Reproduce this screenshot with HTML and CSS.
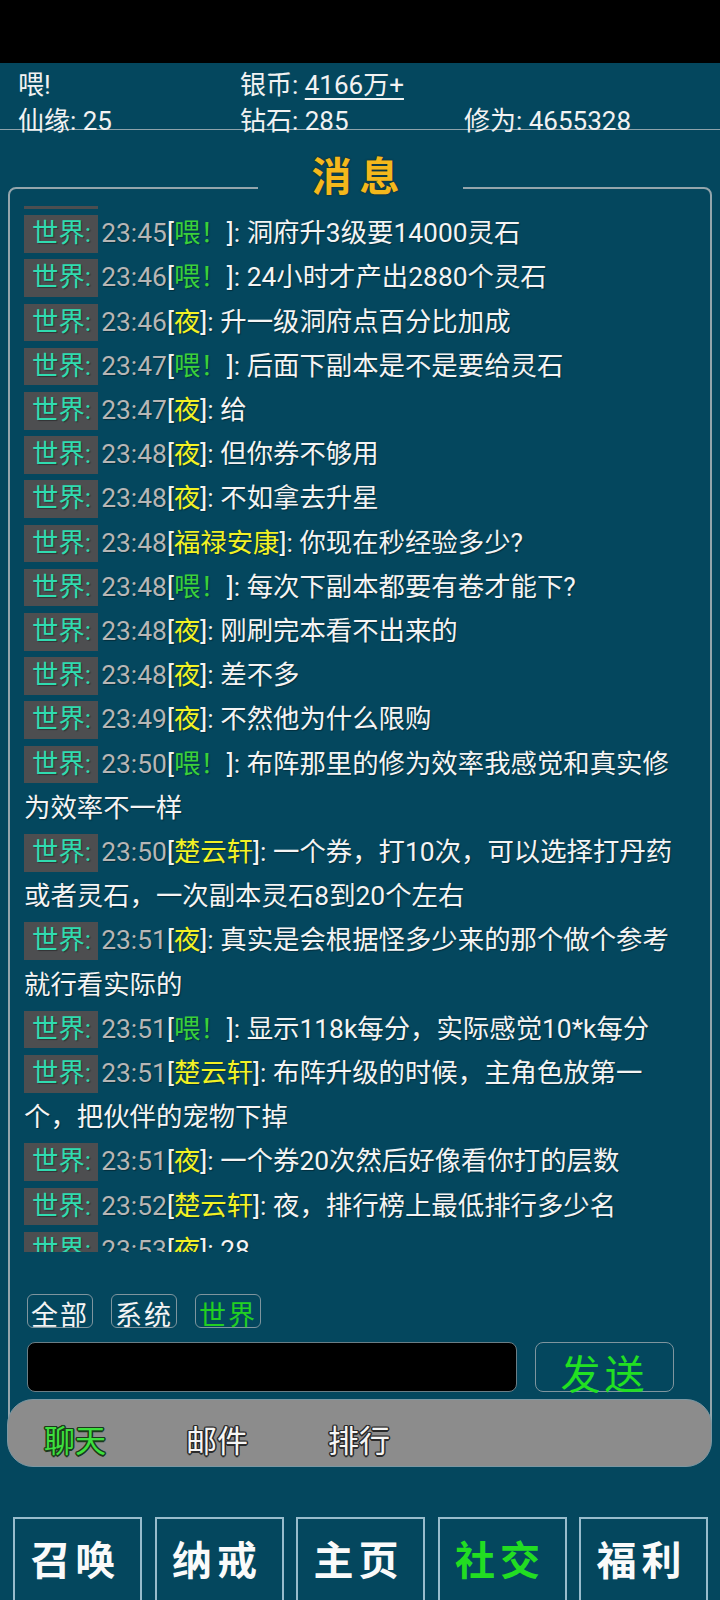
FILE: index.html
```html
<!DOCTYPE html>
<html lang="zh-CN">
<head>
    <meta charset="UTF-8">
    <title>消息</title>
    <link rel="stylesheet" href="styles.css">
</head>
<body>
    <div class="status-bar"></div>

    <header class="stats">
        <div>喂!</div>
        <div>银币: <span class="link">4166万+</span></div>
        <div></div>
        <div>仙缘: 25</div>
        <div>钻石: 285</div>
        <div>修为: 4655328</div>
    </header>

    <section class="panel">
        <h2 class="panel-title">消息</h2>

        <div class="log">
            <p class="msg"><span class="ch">世界:</span><span class="time">23:44</span>[<span class="who y">夜</span>]: 好的</p>
            <p class="msg"><span class="ch">世界:</span><span class="time">23:45</span>[<span class="who g">喂！</span>]: 洞府升3级要14000灵石</p>
            <p class="msg"><span class="ch">世界:</span><span class="time">23:46</span>[<span class="who g">喂！</span>]: 24小时才产出2880个灵石</p>
            <p class="msg"><span class="ch">世界:</span><span class="time">23:46</span>[<span class="who y">夜</span>]: 升一级洞府点百分比加成</p>
            <p class="msg"><span class="ch">世界:</span><span class="time">23:47</span>[<span class="who g">喂！</span>]: 后面下副本是不是要给灵石</p>
            <p class="msg"><span class="ch">世界:</span><span class="time">23:47</span>[<span class="who y">夜</span>]: 给</p>
            <p class="msg"><span class="ch">世界:</span><span class="time">23:48</span>[<span class="who y">夜</span>]: 但你券不够用</p>
            <p class="msg"><span class="ch">世界:</span><span class="time">23:48</span>[<span class="who y">夜</span>]: 不如拿去升星</p>
            <p class="msg"><span class="ch">世界:</span><span class="time">23:48</span>[<span class="who y">福禄安康</span>]: 你现在秒经验多少?</p>
            <p class="msg"><span class="ch">世界:</span><span class="time">23:48</span>[<span class="who g">喂！</span>]: 每次下副本都要有卷才能下?</p>
            <p class="msg"><span class="ch">世界:</span><span class="time">23:48</span>[<span class="who y">夜</span>]: 刚刷完本看不出来的</p>
            <p class="msg"><span class="ch">世界:</span><span class="time">23:48</span>[<span class="who y">夜</span>]: 差不多</p>
            <p class="msg"><span class="ch">世界:</span><span class="time">23:49</span>[<span class="who y">夜</span>]: 不然他为什么限购</p>
            <p class="msg"><span class="ch">世界:</span><span class="time">23:50</span>[<span class="who g">喂！</span>]: 布阵那里的修为效率我感觉和真实修为效率不一样</p>
            <p class="msg"><span class="ch">世界:</span><span class="time">23:50</span>[<span class="who y">楚云轩</span>]: 一个券，打10次，可以选择打丹药或者灵石，一次副本灵石8到20个左右</p>
            <p class="msg"><span class="ch">世界:</span><span class="time">23:51</span>[<span class="who y">夜</span>]: 真实是会根据怪多少来的那个做个参考就行看实际的</p>
            <p class="msg"><span class="ch">世界:</span><span class="time">23:51</span>[<span class="who g">喂！</span>]: 显示118k每分，实际感觉10*k每分</p>
            <p class="msg"><span class="ch">世界:</span><span class="time">23:51</span>[<span class="who y">楚云轩</span>]: 布阵升级的时候，主角色放第一个，把伙伴的宠物下掉</p>
            <p class="msg"><span class="ch">世界:</span><span class="time">23:51</span>[<span class="who y">夜</span>]: 一个券20次然后好像看你打的层数</p>
            <p class="msg"><span class="ch">世界:</span><span class="time">23:52</span>[<span class="who y">楚云轩</span>]: 夜，排行榜上最低排行多少名</p>
            <p class="msg"><span class="ch">世界:</span><span class="time">23:53</span>[<span class="who y">夜</span>]: 28</p>
        </div>

        <div class="filters">
            <span class="chip">全部</span>
            <span class="chip">系统</span>
            <span class="chip on">世界</span>
        </div>

        <div class="compose">
            <div class="input"></div>
            <button class="send">发送</button>
        </div>

        <nav class="tabs">
            <span class="tab on">聊天</span>
            <span class="tab">邮件</span>
            <span class="tab">排行</span>
        </nav>
    </section>

    <nav class="menu">
        <div class="menu-btn">召唤</div>
        <div class="menu-btn">纳戒</div>
        <div class="menu-btn">主页</div>
        <div class="menu-btn on">社交</div>
        <div class="menu-btn">福利</div>
    </nav>
</body>
</html>
```

FILE: styles.css
```css
html, body {
    margin: 0;
    padding: 0;
}

body {
    width: 720px;
    height: 1600px;
    overflow: hidden;
    background-color: #04475e;
    color: #f2f2f2;
    font-family: Roboto, "Noto Sans CJK SC", sans-serif;
}

.status-bar {
    height: 63px;
    background-color: #000;
}

/* top stats */
.stats {
    box-sizing: border-box;
    height: 67px;
    padding: 4px 0 0 18px;
    border-bottom: 1px solid #8ea3ab;
    display: grid;
    grid-template-columns: 222px 224px auto;
    font-size: 26px;
    line-height: 36px;
    white-space: nowrap;
}

.stats .link {
    text-decoration: underline;
    text-decoration-thickness: 2px;
    text-underline-offset: 4px;
}

/* message panel */
.panel {
    position: relative;
    margin: 57px 8px 0;
    padding: 17px 0 0;
    border: 2px solid #94a5ac;
    border-radius: 8px;
}

.panel-title {
    position: absolute;
    top: -35px;
    left: 50%;
    width: 205px;
    margin: 0 0 0 -102px;
    background-color: #04475e;
    text-align: center;
    font-family: "Noto Sans CJK SC", sans-serif;
    font-size: 40px;
    font-weight: 700;
    line-height: 40px;
    letter-spacing: 8px;
    text-indent: -2px;
    color: #f4b81c;
    text-shadow: 0 0 2px rgba(40, 20, 0, 0.8);
}

.log {
    height: 1046px;
    overflow: hidden;
    padding: 0 24px 0 14px;
}

.msg {
    margin: 0;
    font-size: 26.4px;
    line-height: 44.2px;
    color: #f4f4f4;
    text-shadow: 1px 1px 1px rgba(0, 0, 0, 0.35);
}

.msg:first-child {
    margin-top: -39px;
}

.ch {
    display: inline-block;
    height: 37.5px;
    line-height: 37.5px;
    padding: 0 7px 0 8px;
    margin-right: 3px;
    background-color: #4d4e50;
    color: #2fdcb0;
}

.time {
    color: #b6b6b6;
}

.who.g {
    color: #3ad03a;
}

.who.y {
    color: #f2f224;
}

/* channel chips */
.filters {
    display: flex;
    gap: 18px;
    margin: 42px 0 0 17px;
}

.chip {
    box-sizing: border-box;
    height: 34px;
    padding: 0 3px 0 3px;
    border: 1px solid #7f959e;
    border-radius: 6px;
    font-family: "Noto Sans CJK SC", sans-serif;
    font-size: 27px;
    line-height: 38px;
    letter-spacing: 2px;
    color: #f4f4f4;
}

.chip.on {
    color: #22d022;
}

/* input row */
.compose {
    display: flex;
    gap: 18px;
    margin: 14px 0 0 17px;
}

.input {
    width: 490px;
    height: 50px;
    box-sizing: border-box;
    background-color: #000;
    border: 1px solid #6b7e86;
    border-radius: 8px;
}

.send {
    box-sizing: border-box;
    width: 139px;
    height: 50px;
    padding: 5px 0 0 0;
    background: none;
    border: 1px solid #7f959e;
    border-radius: 8px;
    font-family: "Noto Sans CJK SC", sans-serif;
    font-size: 40px;
    line-height: 48px;
    letter-spacing: 4px;
    color: #22e022;
}

/* grey tab strip */
.tabs {
    box-sizing: border-box;
    height: 68px;
    margin: 7px -2px -36px -3px;
    padding: 6px 0 0 36px;
    display: flex;
    gap: 80px;
    background-color: #8c8c8c;
    border: 1px solid #7d97a2;
    border-radius: 26px;
}

.tab {
    font-family: "Noto Sans CJK SC", sans-serif;
    font-size: 31px;
    line-height: 66px;
    color: #f6f6f6;
    text-shadow: -1.5px 0 0 #2b2b2b, 1.5px 0 0 #2b2b2b, 0 -1.5px 0 #2b2b2b, 0 1.5px 0 #2b2b2b,
        -1px -1px 0 #2b2b2b, 1px 1px 0 #2b2b2b, -1px 1px 0 #2b2b2b, 1px -1px 0 #2b2b2b;
}

.tab.on {
    color: #3ee03e;
    text-shadow: -1.5px 0 0 #1c3a1c, 1.5px 0 0 #1c3a1c, 0 -1.5px 0 #1c3a1c, 0 1.5px 0 #1c3a1c,
        -1px -1px 0 #1c3a1c, 1px 1px 0 #1c3a1c, -1px 1px 0 #1c3a1c, 1px -1px 0 #1c3a1c;
}

/* bottom menu */
.menu {
    display: flex;
    gap: 12.5px;
    margin-top: 84px;
    padding-left: 13px;
}

.menu-btn {
    box-sizing: border-box;
    width: 129px;
    height: 100px;
    padding-top: 20px;
    border: 2px solid #98bccc;
    text-align: center;
    font-family: "Noto Sans CJK SC", sans-serif;
    font-size: 40px;
    font-weight: 700;
    line-height: 38px;
    letter-spacing: 5px;
    text-indent: -4px;
    color: #fafafa;
}

.menu-btn.on {
    color: #22dd22;
}
```
